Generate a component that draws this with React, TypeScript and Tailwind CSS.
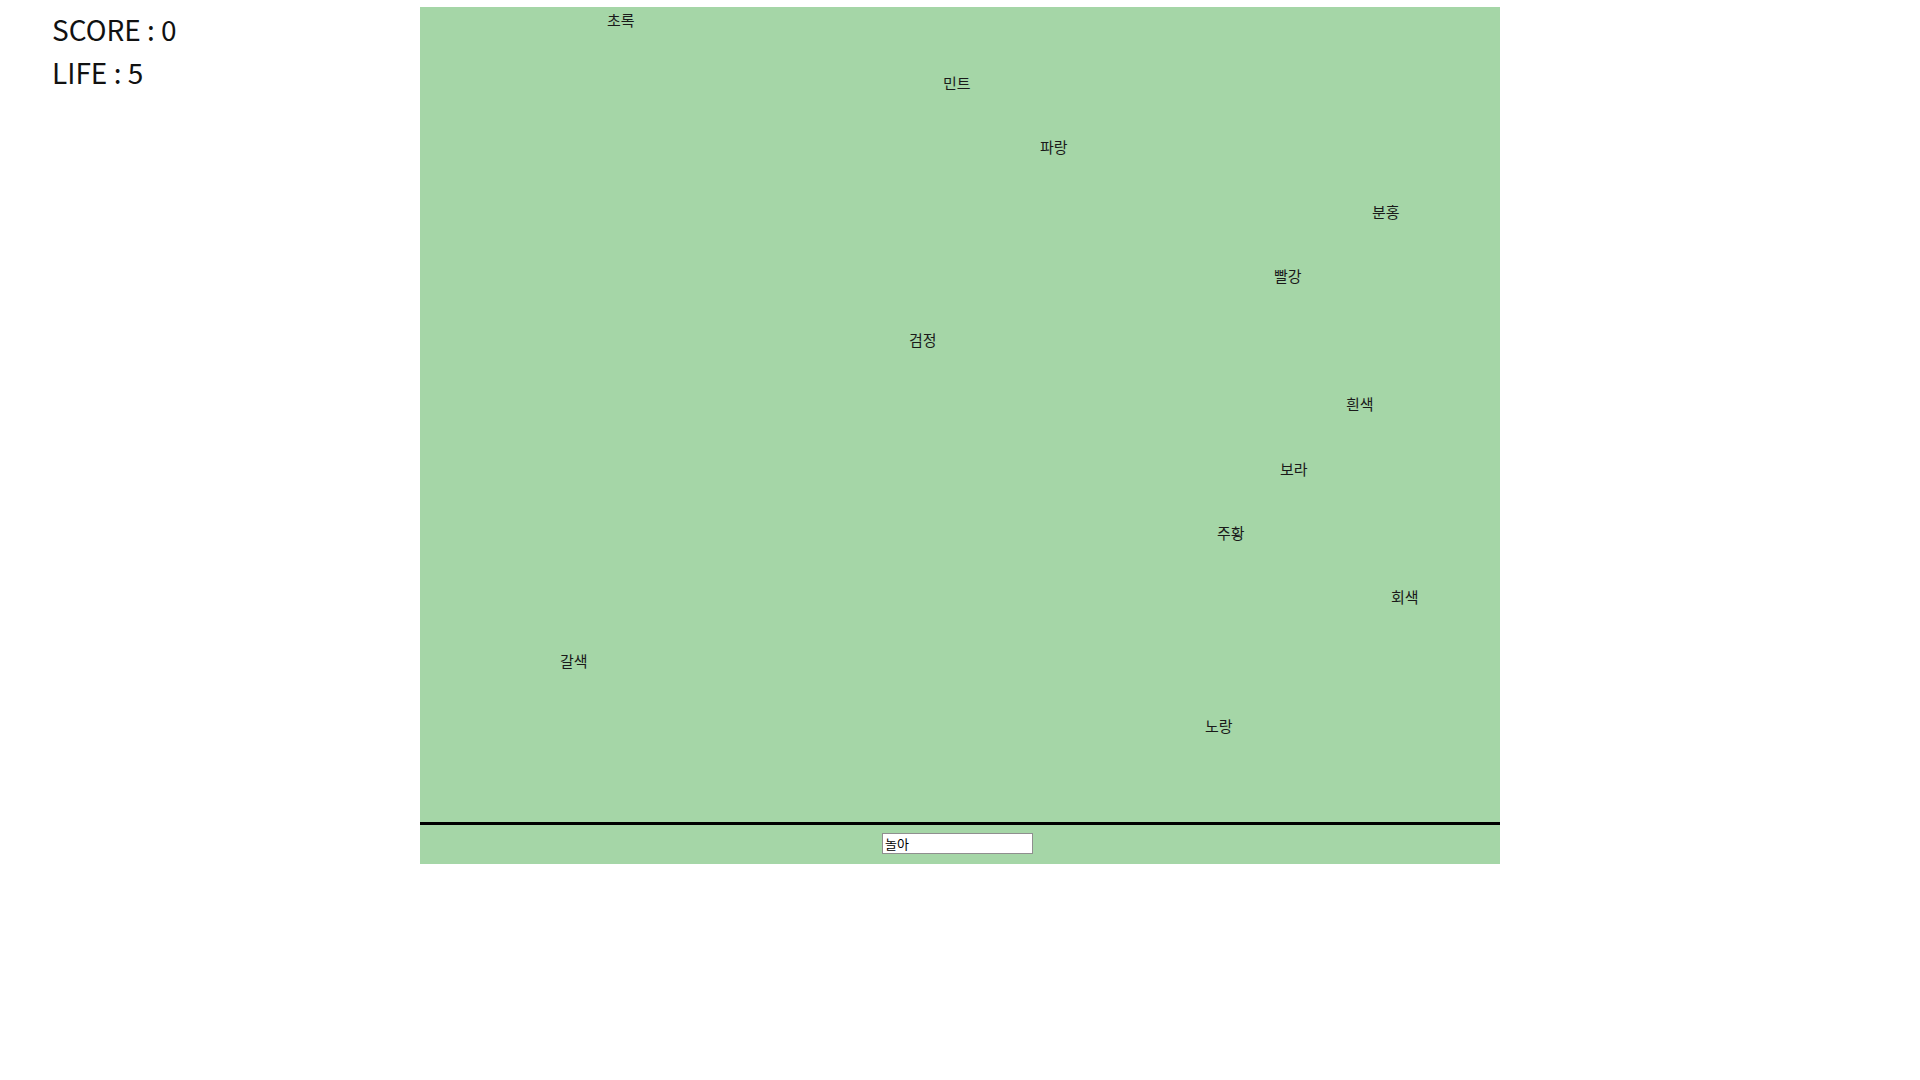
import { useState } from "react";

type Word = { text: string; left: number; top: number };

// falling words currently on the board
const words: Word[] = [
  { text: "초록", left: 187, top: 5 },
  { text: "민트", left: 523, top: 68 },
  { text: "파랑", left: 620, top: 132 },
  { text: "분홍", left: 952, top: 197 },
  { text: "빨강", left: 854, top: 261 },
  { text: "검정", left: 489, top: 325 },
  { text: "흰색", left: 926, top: 389 },
  { text: "보라", left: 860, top: 454 },
  { text: "주황", left: 797, top: 518 },
  { text: "회색", left: 971, top: 582 },
  { text: "갈색", left: 140, top: 646 },
  { text: "노랑", left: 785, top: 711 },
];

export default function App() {
  const [typed, setTyped] = useState("놀아");
  const score = 0;
  const life = 5;

  return (
    <div className="flex min-h-screen bg-white font-['Noto_Sans_CJK_KR',sans-serif] text-black">
      {/* Status */}
      <div className="w-[420px] shrink-0 pl-[52px] pt-[8px] text-[28px] leading-[43px] text-[#111]">
        <div>SCORE : {score}</div>
        <div>LIFE : {life}</div>
      </div>

      {/* Game board */}
      <div className="mt-[7px] flex h-[857px] w-[1080px] shrink-0 flex-col bg-[#a5d6a7]">
        <div className="relative h-[818px] border-b-[3px] border-black">
          {words.map((w) => (
            <span
              key={w.text}
              className="absolute text-[15px] leading-none text-[#1a1a1a]"
              style={{ left: w.left, top: w.top }}
            >
              {w.text}
            </span>
          ))}
        </div>
        <div className="flex h-[39px] items-start justify-center pt-[8px] pr-[5px]">
          <input
            value={typed}
            onChange={(e) => setTyped(e.target.value)}
            className="h-[21px] w-[151px] border border-[#8f8f8f] bg-white px-[2px] text-[13px] leading-none text-black outline-none"
          />
        </div>
      </div>
    </div>
  );
}
